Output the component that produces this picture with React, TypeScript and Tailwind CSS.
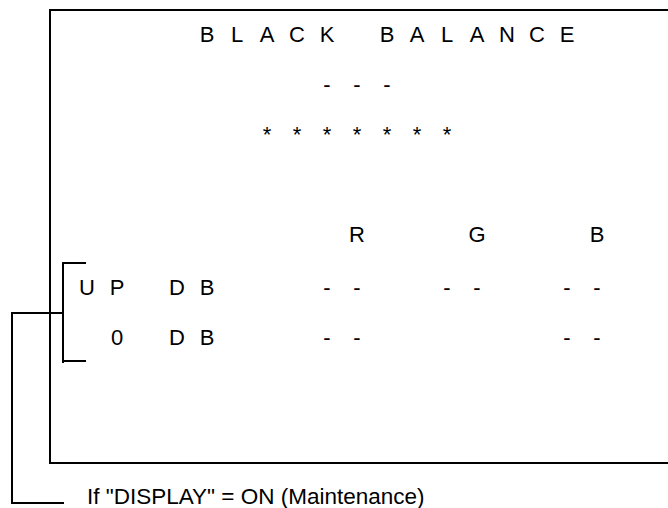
import React from "react";

const rows: { text: string; mt: string }[] = [
  { text: "    BLACK BALANCE ", mt: "mt-[9px]" },
  { text: "        ---       ", mt: "mt-[20px]" },
  { text: "      *******     ", mt: "mt-[20px]" },
  { text: "         R   G   B", mt: "mt-[70px]" },
  { text: "UP DB   --  --  --", mt: "mt-[23px]" },
  { text: " 0 DB   --      --", mt: "mt-[20px]" },
];

function Row({ text, mt }: { text: string; mt: string }) {
  return (
    <div className={`flex ${mt} h-[30px]`}>
      {text.split("").map((c, i) => (
        <span key={i} className="w-[30px] shrink-0 text-center leading-[30px]">
          {c === " " ? "\u00a0" : c}
        </span>
      ))}
    </div>
  );
}

export default function App() {
  return (
    <div
      className="relative w-[668px] h-[508px] overflow-hidden bg-white text-black"
      style={{ fontFamily: '"Liberation Sans", Arial, sans-serif' }}
    >
      <div className="pt-[9px] pl-[49px]">
        <div className="w-[640px] h-[455px] border-l-2 border-t-2 border-b-2 border-black pl-[21px] text-[22px]">
          {rows.map((r, i) => (
            <Row key={i} text={r.text} mt={r.mt} />
          ))}
        </div>
        <div className="mt-[18px] pl-[38px] text-[22.5px] leading-[30px] whitespace-nowrap">
          If "DISPLAY" = ON (Maintenance)
        </div>
      </div>
      <svg
        className="absolute inset-0 pointer-events-none"
        width="668"
        height="508"
        viewBox="0 0 668 508"
      >
        <g fill="#000">
          <rect x="62" y="262" width="2" height="101" />
          <rect x="62" y="262" width="24" height="2" />
          <rect x="62" y="360" width="24" height="2" />
          <rect x="11" y="312" width="53" height="2" />
          <rect x="11" y="312" width="2" height="192" />
          <rect x="11" y="502" width="53" height="2" />
        </g>
      </svg>
    </div>
  );
}
